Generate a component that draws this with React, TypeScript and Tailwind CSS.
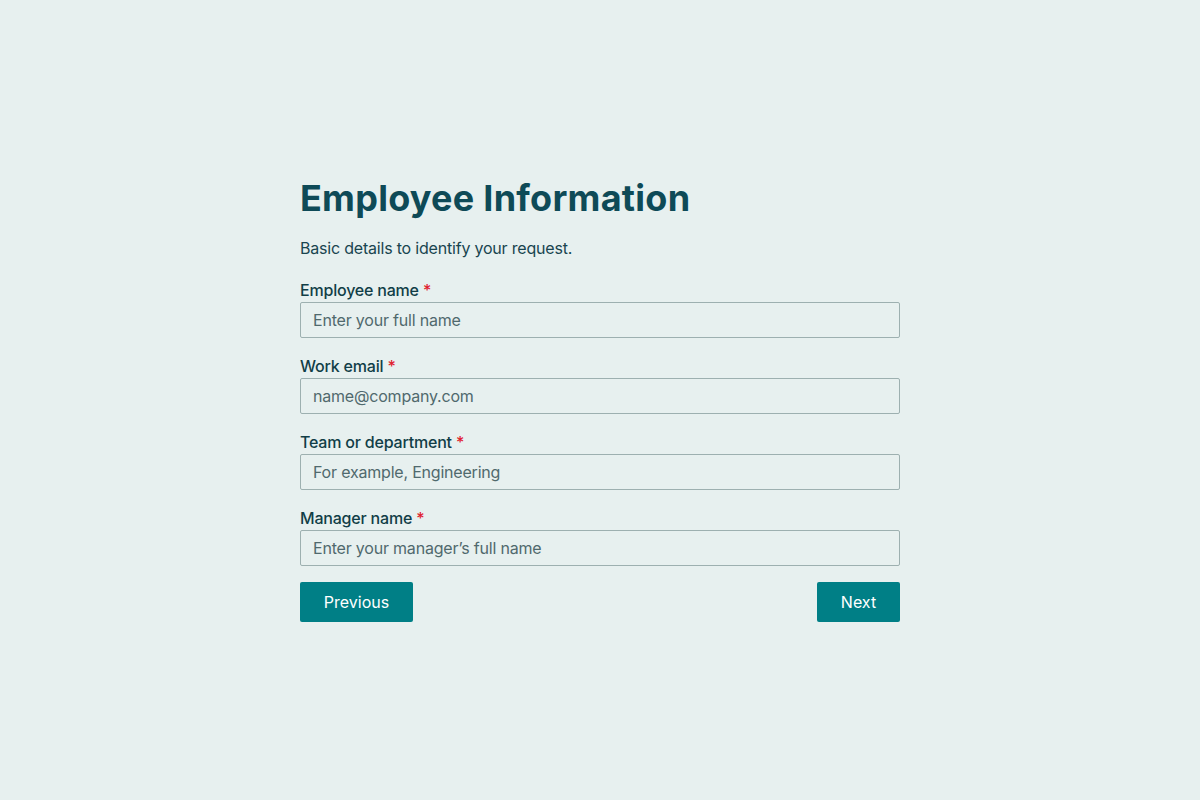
export default function App() {
  const fields = [
    { label: "Employee name", placeholder: "Enter your full name" },
    { label: "Work email", placeholder: "name@company.com" },
    { label: "Team or department", placeholder: "For example, Engineering" },
    { label: "Manager name", placeholder: "Enter your manager\u2019s full name" },
  ];
  return (
    <div
      className="min-h-screen w-full bg-[#e7f0ef] flex items-center justify-center"
      style={{ fontFamily: "Inter, 'Noto Sans', sans-serif" }}
    >
      <div className="w-[600px] flex flex-col">
        <h1 className="text-[36px] leading-[40px] font-bold text-[#0e4a57] tracking-[0.25px]">
          Employee Information
        </h1>
        <p className="mt-[18px] text-[16px] leading-[24px] text-[#19454f] tracking-[-0.2px]">
          Basic details to identify your request.
        </p>
        <div className="mt-[18px] flex flex-col gap-4">
          {fields.map((f) => (
            <label key={f.label} className="flex flex-col">
              <span className="text-[16px] leading-[24px] font-medium text-[#113e47] tracking-[-0.2px]">
                {f.label} <span className="text-[#e0202e]">*</span>
              </span>
              <input
                className="h-9 w-full rounded-[2px] border border-[#9db0b0] bg-[#e7f0ef] px-3 text-[16px] tracking-[-0.2px] text-[#17343a] placeholder:text-[#50696d] outline-none"
                placeholder={f.placeholder}
              />
            </label>
          ))}
        </div>
        <div className="mt-4 flex justify-between">
          <button className="h-10 w-[113px] rounded-[2px] bg-[#007f86] text-white text-[16px]">
            Previous
          </button>
          <button className="h-10 w-[83px] rounded-[2px] bg-[#007f86] text-white text-[16px]">
            Next
          </button>
        </div>
      </div>
    </div>
  );
}
